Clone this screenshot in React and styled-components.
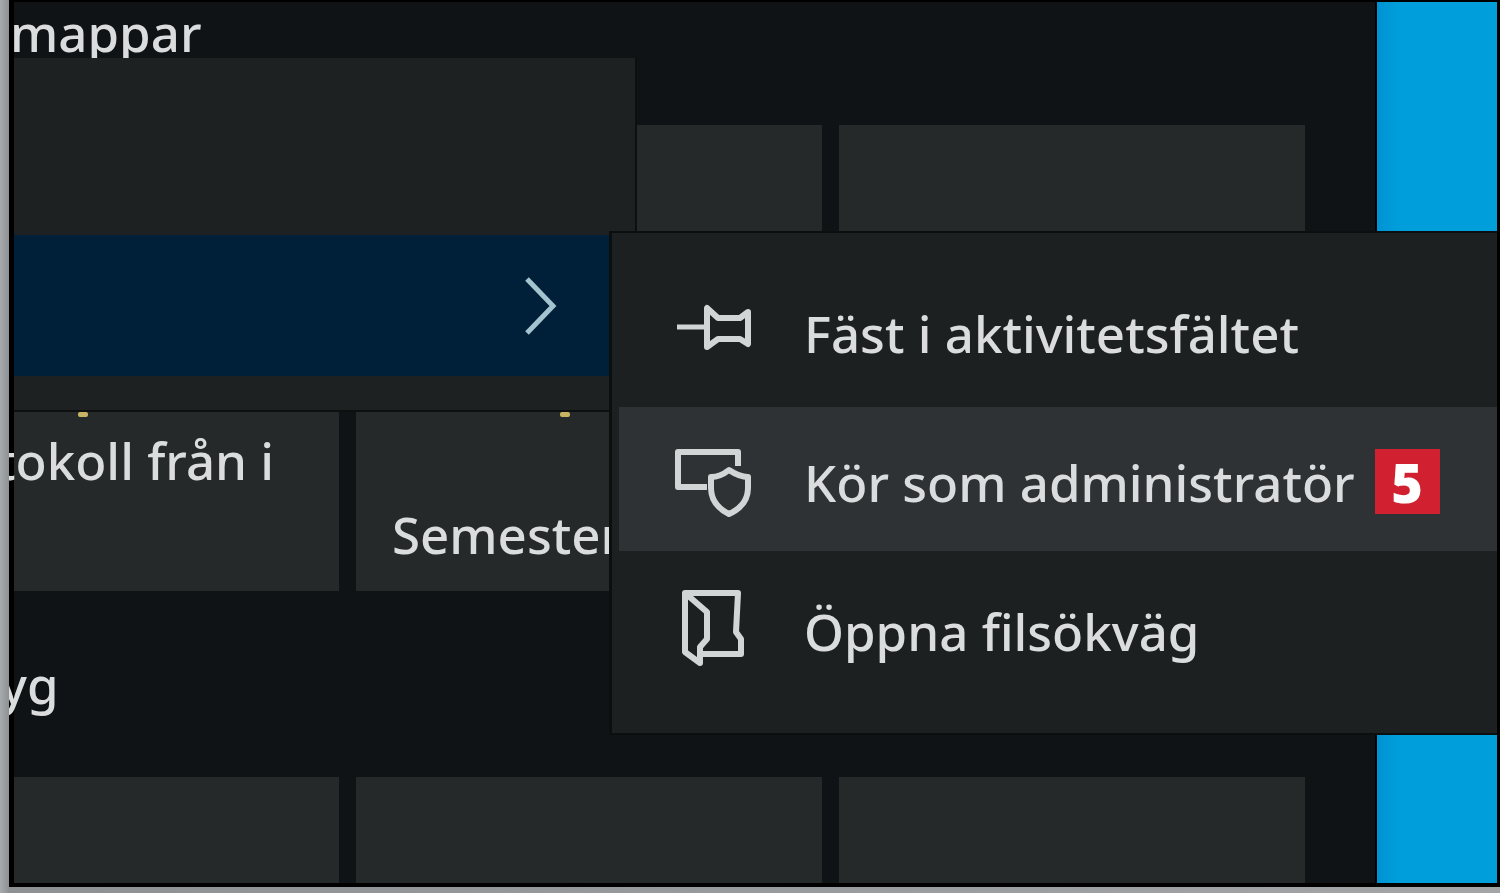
import styled, { createGlobalStyle } from "styled-components";

const GlobalStyle = createGlobalStyle`
  *, *::before, *::after {
    box-sizing: border-box;
  }
  body {
    margin: 0;
    background: #9b9fa2;
    color: #dadcdd;
    font-family: "Noto Sans", "Open Sans", sans-serif;
    font-size: 51px;
    font-weight: 500;
  }
`;

const Page = styled.div`
  display: flex;
  min-height: 100vh;
  padding: 0 0 6px 9px;
  background: linear-gradient(to right, #a7abae, #8d9194 9px, #a3a5a7 100%);
`;

const Screen = styled.div`
  position: relative;
  display: flex;
  flex: 1;
  min-width: 0;
  gap: 2px;
  padding: 2px 3px 4px 5px;
  overflow: hidden;
  background: #000;
`;

const StartPane = styled.main`
  display: flex;
  flex: 1;
  flex-direction: column;
  gap: 63px;
  min-width: 0;
  padding-right: 70px;
  background: #0f1315;
`;

const Desktop = styled.aside`
  flex: 0 0 120px;
  background: linear-gradient(to right, #0093d3, #009fdc 24px, #009fdb);
`;

const Group = styled.section`
  display: flex;
  flex-direction: column;
  flex: ${({ $grow }) => ($grow ? 1 : "none")};
  gap: 63px;
`;

const GroupTitle = styled.h2`
  margin: 0;
  margin-left: ${({ $cut }) => $cut || 0}px;
  font-size: inherit;
  font-weight: inherit;
  line-height: 60px;
  white-space: nowrap;
`;

const Tiles = styled.div`
  display: grid;
  flex: 1;
  grid-template-columns: 325fr 466fr 466fr;
  gap: 17px;
  min-height: ${({ $height }) => $height}px;
`;

const Tile = styled.div`
  display: flex;
  flex-direction: column;
  justify-content: flex-end;
  min-width: 0;
  padding: 0 0 20px;
  background: #252929;
`;

const TileIcon = styled.span`
  width: 10px;
  height: 5px;
  margin: 0 0 6px ${({ $left }) => $left}px;
  border-radius: 2px;
  background: #c9b463;
`;

const TileLabel = styled.span`
  display: flex;
  align-items: ${({ $align }) => $align || "flex-start"};
  height: 148px;
  margin-left: ${({ $left }) => $left}px;
  line-height: 74px;
  white-space: nowrap;
`;

const ContextMenu = styled.div`
  position: absolute;
  top: 58px;
  left: 5px;
  width: 623px;
  padding: 177px 0 34px;
  border-right: 2px solid #0d0f10;
  border-bottom: 2px solid #0d0f10;
  background: #1e2122;
`;

const MoreItem = styled.button`
  display: flex;
  align-items: center;
  justify-content: flex-end;
  width: 100%;
  height: 141px;
  padding: 0 78px 0 0;
  border: 0;
  background: #001f38;
  color: #a3c3cf;
`;

const SubMenu = styled.div`
  position: absolute;
  top: 231px;
  right: 3px;
  left: 600px;
  display: flex;
  flex-direction: column;
  gap: 5px;
  padding: 25px 0 33px 7px;
  border: solid #0c0e0f;
  border-width: 2px 0 2px 3px;
  background: #1c2021;
`;

const SubMenuItem = styled.button`
  display: flex;
  align-items: center;
  height: 144px;
  padding: 5px 0 0 53px;
  border: 0;
  background: ${({ $active }) => ($active ? "#2e3235" : "transparent")};
  color: inherit;
  font: inherit;
  line-height: 70px;
  text-align: left;
  white-space: nowrap;
`;

const ItemIcon = styled.svg`
  flex: none;
  width: 84px;
  height: 84px;
  margin-right: 48px;
  overflow: visible;
  fill: none;
  stroke: #d2d5d6;
  stroke-width: 6px;
  stroke-linejoin: round;
`;

const StepBadge = styled.span`
  display: flex;
  align-items: center;
  justify-content: center;
  width: 65px;
  height: 65px;
  margin-left: 20px;
  background: #d1202f;
  color: #fff;
  font-family: "Open Sans", "Noto Sans", sans-serif;
  font-size: 54px;
  font-weight: 800;
`;

const PinIcon = () => (
  <ItemIcon viewBox="0 0 84 84" aria-hidden="true">
    <path d="M5 36H34" strokeWidth="5" />
    <path d="M35 17V56L46 48H68L76 53V21L68 27H46Z" />
  </ItemIcon>
);

const AdminIcon = () => (
  <ItemIcon viewBox="0 0 84 84" aria-hidden="true">
    <path d="M66 26V12H6V47H35" />
    <path d="M57 30C52 34 46 37 39 37V48C39 61 47 69 57 74C68 69 76 61 76 48V37C69 37 63 34 57 30Z" />
  </ItemIcon>
);

const FolderIcon = () => (
  <ItemIcon viewBox="0 0 84 84" aria-hidden="true">
    <path d="M13 4H66L64 43L69 50V65H29" />
    <path d="M13 4L35 23V50L28 58V74L13 63Z" />
  </ItemIcon>
);

const menuItems = [
  { label: "Fäst i aktivitetsfältet", Icon: PinIcon },
  { label: "Kör som administratör", Icon: AdminIcon, active: true, step: 5 },
  { label: "Öppna filsökväg", Icon: FolderIcon },
];

export default function App() {
  return (
    <>
      <GlobalStyle />
      <Page>
        <Screen>
          <StartPane>
            <Group>
              <GroupTitle $cut={-4}>mappar</GroupTitle>
              <Tiles $height={466}>
                <Tile>
                  <TileIcon $left={64} />
                  <TileLabel $left={-18}>tokoll från i</TileLabel>
                </Tile>
                <Tile>
                  <TileIcon $left={204} />
                  <TileLabel $left={36} $align="flex-end">
                    Semester
                  </TileLabel>
                </Tile>
                <Tile />
              </Tiles>
            </Group>
            <Group $grow>
              <GroupTitle $cut={-14}>yg</GroupTitle>
              <Tiles $height={106}>
                <Tile />
                <Tile />
                <Tile />
              </Tiles>
            </Group>
          </StartPane>
          <Desktop />

          <ContextMenu role="menu">
            <MoreItem role="menuitem" aria-label="Mer" aria-haspopup="menu">
              <svg width="34" height="60" viewBox="0 0 34 60" fill="none" stroke="currentColor" strokeWidth="5">
                <path d="M4 3L30 30L4 57" />
              </svg>
            </MoreItem>
          </ContextMenu>

          <SubMenu role="menu">
            {menuItems.map(({ label, Icon, active, step }) => (
              <SubMenuItem key={label} role="menuitem" $active={active}>
                <Icon />
                {label}
                {step && <StepBadge>{step}</StepBadge>}
              </SubMenuItem>
            ))}
          </SubMenu>
        </Screen>
      </Page>
    </>
  );
}
